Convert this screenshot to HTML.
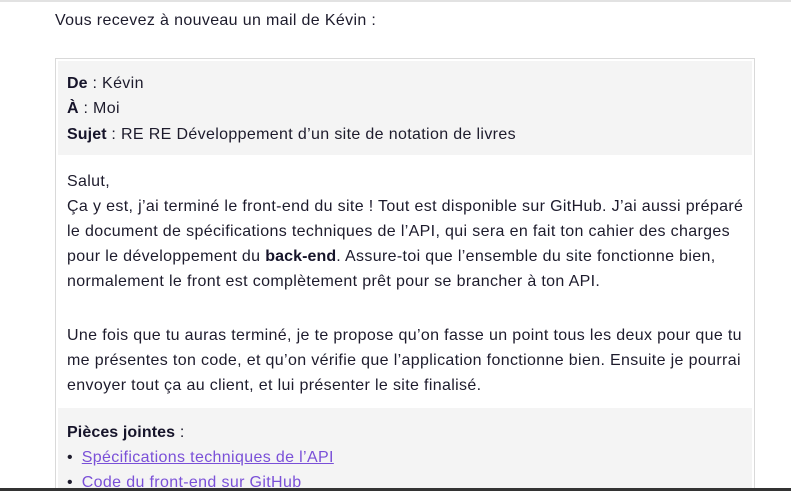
<!DOCTYPE html>
<html><head><meta charset="utf-8"><style>
html,body{margin:0;padding:0;background:#fff;width:791px;height:491px;overflow:hidden;position:relative}
body{font-family:"Liberation Sans",sans-serif;font-size:16px;color:#1d1b2c;letter-spacing:0.35px}
.top{position:absolute;left:0;top:0;width:791px;height:2px;background:#e2e2e2}
.bot{position:absolute;left:0;top:488px;width:791px;height:3px;background:#333}
.intro{position:absolute;left:55px;top:10px;line-height:22px}
.box{position:absolute;left:55px;top:58px;width:698px;height:440px;border:1px solid #d9d9d9}
.gray{background:#f4f4f4;position:absolute;left:2px;width:694px}
.l{position:absolute;left:11px;white-space:nowrap;line-height:25px;top:0}
b{font-weight:bold;color:#16142a;letter-spacing:0.1px}
a{color:#7a50d8;text-decoration:underline;margin-left:4px}
</style></head><body>
<div class="top"></div>
<div class="intro">Vous recevez à nouveau un mail de Kévin :</div>
<div class="box">
 <div class="gray" style="top:2px;height:94px"></div>
 <div class="gray" style="top:349px;height:100px"></div>
 <div class="l" style="top:12px"><b>De</b> : Kévin</div>
 <div class="l" style="top:37px"><b>À</b> : Moi</div>
 <div class="l" style="top:63px"><b>Sujet</b> : RE RE Développement d’un site de notation de livres</div>
 <div class="l" style="top:110px">Salut,</div>
 <div class="l" style="top:135px">Ça y est, j’ai terminé le front-end du site ! Tout est disponible sur GitHub. J’ai aussi préparé</div>
 <div class="l" style="top:160px">le document de spécifications techniques de l’API, qui sera en fait ton cahier des charges</div>
 <div class="l" style="top:185px">pour le développement du <b>back-end</b>. Assure-toi que l’ensemble du site fonctionne bien,</div>
 <div class="l" style="top:210px">normalement le front est complètement prêt pour se brancher à ton API.</div>
 <div class="l" style="top:264px">Une fois que tu auras terminé, je te propose qu’on fasse un point tous les deux pour que tu</div>
 <div class="l" style="top:289px">me présentes ton code, et qu’on vérifie que l’application fonctionne bien. Ensuite je pourrai</div>
 <div class="l" style="top:314px">envoyer tout ça au client, et lui présenter le site finalisé.</div>
 <div class="l" style="top:361px"><b>Pièces jointes</b> :</div>
 <div class="l" style="top:386px">• <a>Spécifications techniques de l’API</a></div>
 <div class="l" style="top:411px">• <a>Code du front-end sur GitHub</a></div>
</div>
<div class="bot"></div>
</body></html>
